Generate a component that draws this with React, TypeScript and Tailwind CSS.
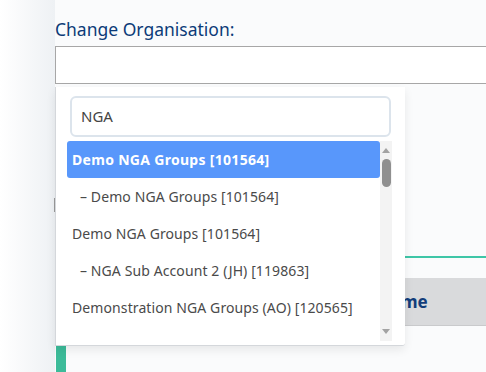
import React from 'react';

const options = [
  { label: 'Demo NGA Groups [101564]', child: false, active: true },
  { label: '– Demo NGA Groups [101564]', child: true, active: false },
  { label: 'Demo NGA Groups [101564]', child: false, active: false },
  { label: '– NGA Sub Account 2 (JH) [119863]', child: true, active: false },
  { label: 'Demonstration NGA Groups (AO) [120565]', child: false, active: false },
];

export default function App() {
  return (
    <div
      className="relative w-[486px] h-[372px] overflow-hidden bg-[#fafbfc] text-[#444]"
      style={{ fontFamily: '"Noto Sans", Lato, sans-serif' }}
    >
      <div className="flex h-full">
        {/* left margin shade */}
        <div className="w-[55px] shrink-0 bg-gradient-to-r from-white to-[#eef1f4]" />

        <div className="flex-1 flex flex-col pt-[17px]">
          <div className="h-[29px] text-[17.5px] leading-[24px] text-[#0c3b78]">Change Organisation:</div>
          <div className="h-[38px] w-[460px] border border-[#a7a7a7] bg-white" />

          {/* page content behind the dropdown */}
          <div className="mt-[114px] flex">
            <div className="w-px h-[14px] bg-[#9a9a9a] -ml-px" />
          </div>
          <div className="mt-[44px] border-t-2 border-[#3ec6a7]" />
          <div className="mt-[20px] h-[48px] bg-[#d9dadc] border-b border-[#c9cacc] flex items-center pl-[322px] text-[17px] font-bold text-[#123d7a]">
            Name
          </div>
          <div className="mt-[18px] flex-1 ml-px w-[10px] bg-[#3cbb99]" />
        </div>
      </div>

      {/* open select dropdown */}
      <div className="absolute left-[55px] top-[87px] w-[350px] h-[259px] bg-white border-l border-b border-[#d4d7db] rounded-br-[3px] shadow-[0_4px_10px_rgba(0,0,0,0.08)] pt-[9px] pl-[11px]">
        <div className="ml-[3px] w-[321px] h-[41px] rounded-[6px] border-2 border-[#dce4ec] flex items-center pl-[9px] text-[15px] text-[#444]">
          NGA
        </div>
        <div className="mt-[4px] flex h-[200px]">
          <div className="w-[313px] overflow-hidden">
            {options.map((o, i) => (
              <div
                key={i}
                className={`h-[37px] flex items-center whitespace-nowrap text-[14px] ${
                  o.child ? 'pl-[13px]' : 'pl-[5px]'
                } ${
                  o.active
                    ? 'bg-[#5897fb] text-white font-bold tracking-[0.3px] rounded-[3px]'
                    : 'text-[#4a4a4a] tracking-[0.1px]'
                }`}
              >
                {o.label}
              </div>
            ))}
          </div>
          <div className="w-[12px] bg-[#f3f3f3] flex flex-col items-center pt-[7px] pb-[7px]">
            <div className="w-0 h-0 border-l-[4px] border-r-[4px] border-b-[5px] border-l-transparent border-r-transparent border-b-[#a3a3a3]" />
            <div className="mt-[6px] w-[9px] h-[28px] rounded-full bg-[#8f8f8f]" />
            <div className="flex-1" />
            <div className="w-0 h-0 border-l-[4px] border-r-[4px] border-t-[5px] border-l-transparent border-r-transparent border-t-[#a3a3a3]" />
          </div>
        </div>
      </div>
    </div>
  );
}
